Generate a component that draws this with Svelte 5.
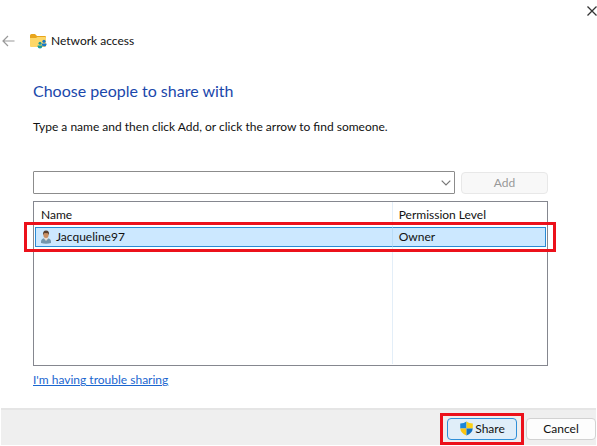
<script>
  let name = $state('');
  let selected = $state(0);
  const people = [{ name: 'Jacqueline97', level: 'Owner' }];
</script>

<main class="dialog">
  <div class="caption">
    <button class="bare close" aria-label="Close">
      <svg width="10" height="10" viewBox="0 0 10 10"><path d="M.5.5l9 9M9.5.5l-9 9" stroke="#333" stroke-width="1.3" /></svg>
    </button>
  </div>

  <header>
    <button class="bare back" aria-label="Back">
      <svg width="13" height="12" viewBox="0 0 13 12"><path d="M12.5 6H1M6 1L1 6l5 5" fill="none" stroke="#999" stroke-width="1.2" /></svg>
    </button>
    <svg width="17" height="16" viewBox="0 0 17 16" aria-hidden="true">
      <path d="M0 2.500Q0 1 1.500 1H5l2 2h8q1 0 1 1.200V7H0z" fill="#e8a51c" />
      <path d="M0 5h6l1.500-1H15q1 0 1 1v8q0 1-1 1H1q-1 0-1-1z" fill="#fdd768" />
      <circle cx="14" cy="8.300" r="1.600" fill="#1878c8" />
      <path d="M11.800 10.500h4.700v.8q0 2.200-2.300 2.200t-2.400-2.200z" fill="#1878c8" />
      <circle cx="10" cy="10.300" r="1.500" fill="#189a9c" />
      <path d="M7.600 12.400h4.700v.8q0 2.200-2.300 2.200t-2.400-2.200z" fill="#189a9c" />
    </svg>
    <span>Network access</span>
  </header>

  <section class="content">
    <h1>Choose people to share with</h1>
    <label for="person">Type a name and then click Add, or click the arrow to find someone.</label>

    <div class="entry">
      <div class="combo">
        <input id="person" type="text" autocomplete="off" bind:value={name} />
        <button class="bare" aria-label="Find someone">
          <svg width="10" height="6" viewBox="0 0 10 6"><path d="M.7.7L5 5 9.300.7" fill="none" stroke="#777" stroke-width="1.200" /></svg>
        </button>
      </div>
      <button class="btn add" disabled={!name}>Add</button>
    </div>

    <div class="list">
      <table>
        <thead>
          <tr><th class="who">Name</th><th>Permission Level</th></tr>
        </thead>
        <tbody>
          {#each people as person, i}
            <tr class:selected={selected === i} onclick={() => (selected = i)}>
              <td class="who">
                <span class="person">
                  <svg width="12" height="14" viewBox="0 0 12 14" aria-hidden="true">
                    <path d="M1 13V11.500Q1 9 4 8.200h4q3 .8 3 3.300V13q-5 1.500-10 0z" fill="#7396ad" />
                    <path d="M4.500 7h3l.8 1.500L6 11 4 8.500z" fill="#e7ddd2" />
                    <ellipse cx="6" cy="4.500" rx="2.700" ry="3.500" fill="#c98f62" />
                    <path d="M3.200 5Q2.500.7 6 .6q3.700.1 2.900 4.400L8 3.200 4.500 3z" fill="#59402f" />
                  </svg>
                  {person.name}
                </span>
              </td>
              <td>{person.level}</td>
            </tr>
          {/each}
          <tr class="rest"><td class="who"></td><td></td></tr>
        </tbody>
      </table>
      <div class="marker"></div>
    </div>

    <a href="#help">I'm having trouble sharing</a>
  </section>

  <footer>
    <div class="ring">
      <button class="btn primary">
        <svg width="15" height="15" viewBox="0 0 15 16" aria-hidden="true">
          <path d="M7.500.5Q5 2.500.8 2.700V8h6.700z" fill="#1a86d9" />
          <path d="M7.500.5Q10 2.500 14.200 2.700V8H7.500z" fill="#fcd116" />
          <path d="M.8 8h6.700v7.500Q1.300 13 .8 8z" fill="#fbc510" />
          <path d="M14.200 8H7.500v7.500Q13.700 13 14.200 8z" fill="#1272c4" />
        </svg>
        Share
      </button>
    </div>
    <button class="btn">Cancel</button>
  </footer>
</main>

<style>
  :global(body) {
    background: #fff;
  }
  .dialog,
  .dialog * {
    box-sizing: border-box;
  }
  .dialog {
    font: 12px/16px Lato, 'Open Sans', sans-serif;
    color: #111;
  }
  svg {
    display: block;
    flex: none;
  }
  button,
  input {
    font: inherit;
    color: inherit;
  }
  .bare {
    border: 0;
    padding: 0;
    background: none;
  }
  .caption {
    display: flex;
    justify-content: flex-end;
    height: 32px;
    padding-top: 6px;
  }
  .close {
    height: 10px;
  }
  header {
    display: flex;
    align-items: center;
    height: 18px;
    padding-left: 2px;
  }
  .back {
    margin-right: 15px;
  }
  header span {
    margin-left: 4px;
  }
  .content {
    padding: 31px 49px 20px 33px;
  }
  h1 {
    margin: 0 0 18px;
    font-size: 16px;
    line-height: 20px;
    font-weight: 400;
    color: #1a47ab;
  }
  label {
    display: block;
    white-space: nowrap;
  }
  .entry {
    display: flex;
    align-items: center;
    gap: 6px;
    margin: 36px 0 7px;
  }
  .combo {
    display: flex;
    flex: 1;
    height: 23px;
    border: 1px solid #8c8c8c;
    border-radius: 1px;
  }
  .combo input {
    flex: 1;
    min-width: 0;
    border: 0;
    padding: 0 6px;
    outline: 0;
    background: none;
  }
  .combo button {
    display: grid;
    place-items: center;
    width: 16px;
  }
  .btn {
    display: flex;
    align-items: center;
    justify-content: center;
    gap: 1px;
    width: 70px;
    height: 22px;
    padding: 0;
    border: 1px solid #d2d2d2;
    border-radius: 4px;
    background: #fdfdfd;
  }
  .add {
    width: 87px;
  }
  .add:disabled {
    color: #999;
    border-color: #e8e8e8;
    background: #f8f8f8;
  }
  .list {
    position: relative;
    height: 165px;
    border: 1px solid #85878f;
    padding: 0 1px 1px;
  }
  table {
    width: 100%;
    height: 100%;
    table-layout: fixed;
    border-collapse: separate;
    border-spacing: 0;
  }
  th,
  td {
    padding: 0 6px;
    text-align: left;
    font-weight: 400;
  }
  .who {
    width: 70%;
    border-right: 1px solid #e3eef8;
  }
  th {
    height: 25px;
  }
  tbody td {
    height: 20px;
  }
  .selected td {
    background: #cce8ff;
    border-top: 1px solid #2a8ad4;
    border-bottom: 1px solid #2a8ad4;
  }
  .selected td:first-child {
    padding-left: 4px;
    border-left: 1px solid #2a8ad4;
    border-right-color: #b9dcf7;
  }
  .selected td:last-child {
    border-right: 1px solid #2a8ad4;
  }
  .rest td {
    height: auto;
  }
  .person {
    display: flex;
    align-items: center;
    gap: 4px;
  }
  .marker {
    position: absolute;
    top: 20px;
    left: -10px;
    right: -9px;
    height: 30px;
    border: 3px solid #ec111b;
    pointer-events: none;
  }
  a {
    display: inline-block;
    margin-top: 6px;
    color: #1a66cf;
  }
  footer {
    display: flex;
    align-items: center;
    justify-content: flex-end;
    gap: 2px;
    height: 37px;
    margin: 0 1px;
    padding-top: 2px;
    border-top: 2px solid #e5e5e5;
    background: #efefef;
  }
  .ring {
    padding: 2px 4px;
    border: 3px solid #ec111b;
  }
  .primary {
    border-color: #2f8fd8;
    background: #e0eef9;
  }
</style>
